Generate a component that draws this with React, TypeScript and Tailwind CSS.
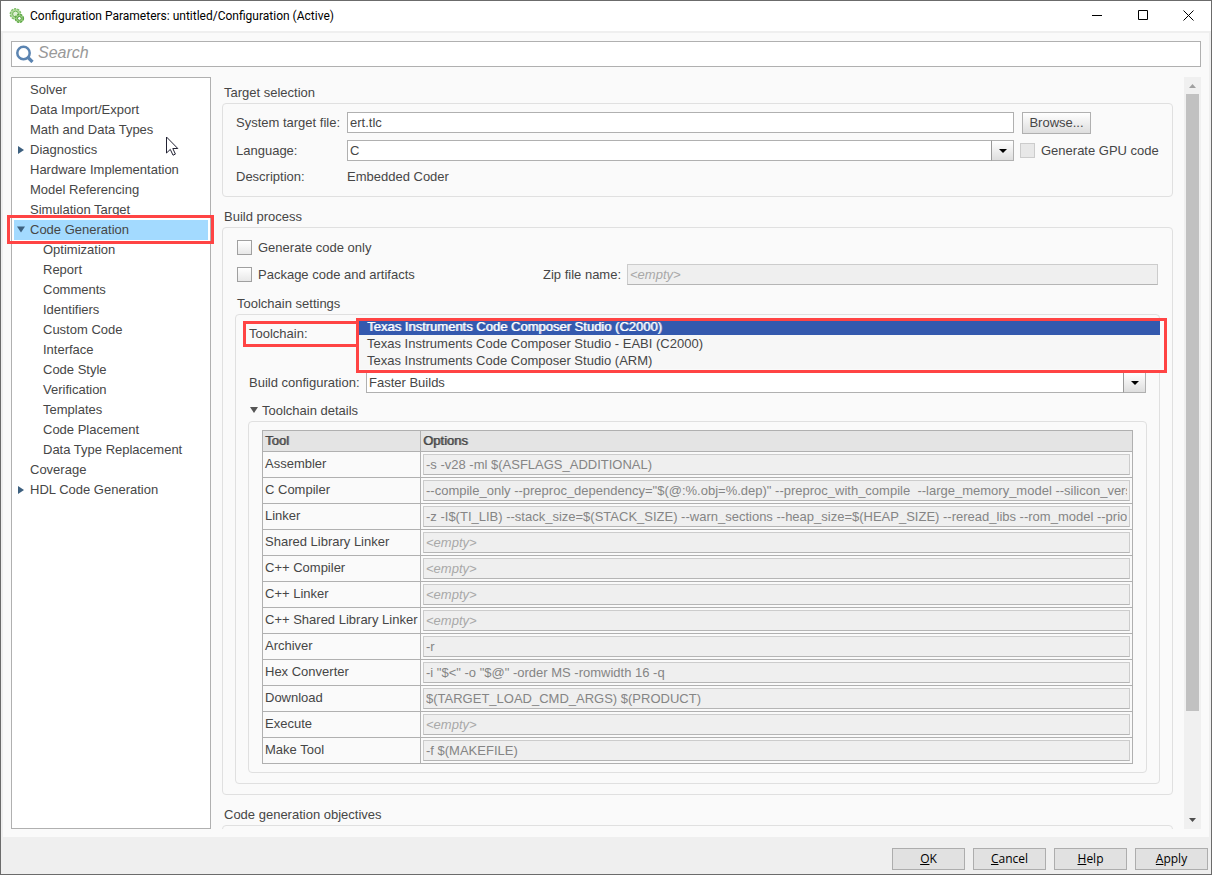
import { ReactNode, useState } from 'react';

interface TreeItem {
  label: string;
  level?: number;
  state?: 'open' | 'closed';
}

const TREE: TreeItem[] = [
  { label: 'Solver' },
  { label: 'Data Import/Export' },
  { label: 'Math and Data Types' },
  { label: 'Diagnostics', state: 'closed' },
  { label: 'Hardware Implementation' },
  { label: 'Model Referencing' },
  { label: 'Simulation Target' },
  { label: 'Code Generation', state: 'open' },
  { label: 'Optimization', level: 1 },
  { label: 'Report', level: 1 },
  { label: 'Comments', level: 1 },
  { label: 'Identifiers', level: 1 },
  { label: 'Custom Code', level: 1 },
  { label: 'Interface', level: 1 },
  { label: 'Code Style', level: 1 },
  { label: 'Verification', level: 1 },
  { label: 'Templates', level: 1 },
  { label: 'Code Placement', level: 1 },
  { label: 'Data Type Replacement', level: 1 },
  { label: 'Coverage' },
  { label: 'HDL Code Generation', state: 'closed' },
];

const TOOLS = [
  { name: 'Assembler', options: '-s -v28 -ml $(ASFLAGS_ADDITIONAL)' },
  {
    name: 'C Compiler',
    options:
      '--compile_only --preproc_dependency="$(@:%.obj=%.dep)" --preproc_with_compile  --large_memory_model --silicon_version=28',
  },
  {
    name: 'Linker',
    options:
      '-z -I$(TI_LIB) --stack_size=$(STACK_SIZE) --warn_sections --heap_size=$(HEAP_SIZE) --reread_libs --rom_model --priority',
  },
  { name: 'Shared Library Linker', options: '' },
  { name: 'C++ Compiler', options: '' },
  { name: 'C++ Linker', options: '' },
  { name: 'C++ Shared Library Linker', options: '' },
  { name: 'Archiver', options: '-r' },
  { name: 'Hex Converter', options: '-i "$<" -o "$@" -order MS -romwidth 16 -q' },
  { name: 'Download', options: '$(TARGET_LOAD_CMD_ARGS) $(PRODUCT)' },
  { name: 'Execute', options: '' },
  { name: 'Make Tool', options: '-f $(MAKEFILE)' },
];

const TOOLCHAINS = [
  'Texas Instruments Code Composer Studio (C2000)',
  'Texas Instruments Code Composer Studio - EABI (C2000)',
  'Texas Instruments Code Composer Studio (ARM)',
];

const disabledInput =
  'block h-[21px] w-full border border-[#cccccc] border-b-[#b5b5b5] bg-[#efefef] px-[2px] text-[#858585] placeholder:italic placeholder:text-[#a8a8a8]';

function GearIcon() {
  return (
    <svg width="16" height="16" viewBox="0 0 16 16" aria-hidden="true">
      <circle cx="6.5" cy="6" r="5.2" fill="#b5dba0" stroke="#7fbf6a" strokeWidth="1.4" strokeDasharray="2.2 1" />
      <circle cx="6.5" cy="6" r="2.9" fill="#dff0d4" stroke="#6cb356" />
      <circle cx="10.4" cy="10.4" r="4" fill="#9fd184" stroke="#5aa544" strokeWidth="1.4" strokeDasharray="2.2 1" />
      <circle cx="10.4" cy="10.4" r="1.9" fill="#fff" stroke="#4c9a3a" />
    </svg>
  );
}

function Twisty({ state }: { state: 'open' | 'closed' }) {
  return (
    <svg width="10" height="10" viewBox="0 0 10 10" fill="#3d607f" aria-hidden="true">
      {state === 'open' ? <path d="M1 1.500h8L5 7.500z" /> : <path d="M2 1v8l6-4z" />}
    </svg>
  );
}

function DropDown({ id, value }: { id: string; value: string }) {
  return (
    <div className="relative">
      <select id={id} className="block h-[21px] w-full appearance-none border border-[#b0b0b0] bg-white px-[2px] leading-[19px]">
        <option>{value}</option>
      </select>
      <span className="pointer-events-none absolute inset-y-0 right-0 flex w-[23px] items-center justify-center border border-[#b0b0b0] border-l-[#999999] bg-linear-to-b from-white to-[#dedede]">
        <svg width="8" height="4" viewBox="0 0 8 4" aria-hidden="true">
          <path d="M0 0h8L4 4z" fill="#000" />
        </svg>
      </span>
    </div>
  );
}

function CheckBox({ label, disabled }: { label: string; disabled?: boolean }) {
  return (
    <label className="flex h-[15px] items-center gap-[6px] whitespace-nowrap">
      <input
        type="checkbox"
        disabled={disabled}
        className="size-[15px] appearance-none border border-[#a0a0a0] bg-linear-to-b from-white to-[#e8e8e8] checked:bg-[#3b5bb0] disabled:border-[#cccccc] disabled:from-[#e8e8e8]"
      />
      {label}
    </label>
  );
}

function Group({ children, className = '' }: { children?: ReactNode; className?: string }) {
  return <div className={`rounded border border-[#e0e0e0] ${className}`}>{children}</div>;
}

function Sidebar() {
  const [selected, setSelected] = useState('Code Generation');

  return (
    <nav className="relative w-[200px] shrink-0 border border-[#b0b0b0] bg-white px-[2px] pt-[2px]">
      {TREE.map((item) => (
        <div key={item.label} className="relative">
          <button
            onClick={() => setSelected(item.label)}
            className={`flex h-5 w-full items-center text-left whitespace-nowrap ${
              item.label === selected ? 'bg-[#a3daff]' : ''
            }`}
          >
            <span className={`flex shrink-0 justify-start pl-[2px] ${item.level ? 'w-[29px]' : 'w-4'}`}>
              {item.state && <Twisty state={item.state} />}
            </span>
            {item.label}
          </button>
          {item.label === 'Code Generation' && (
            <div className="pointer-events-none absolute -top-[5px] -right-[6px] -bottom-1 -left-[7px] z-10 border-3 border-[#ff4444]" />
          )}
        </div>
      ))}
      <svg
        className="pointer-events-none absolute top-[58px] left-[154px]"
        width="13"
        height="20"
        viewBox="0 0 13 20"
        aria-hidden="true"
      >
        <path d="M.5 1v16l3.8-3.6L7 19.2l2.4-1.1-2.6-5.6h5z" fill="#fff" stroke="#222233" />
      </svg>
    </nav>
  );
}

function TargetSelection() {
  return (
    <section>
      <h2 className="mt-2 mb-[2px] pl-[2px]">Target selection</h2>
      <Group className="grid h-[94px] grid-cols-[111px_1fr_158px] content-start items-center gap-y-[6px] pt-2 pl-[13px]">
        <label htmlFor="target-file">System target file:</label>
        <input
          id="target-file"
          defaultValue="ert.tlc"
          className="h-[21px] w-full self-start border border-[#b0b0b0] bg-white px-[2px]"
        />
        <button className="ml-2 h-[22px] w-[69px] border border-[#b0b0b0] bg-linear-to-b from-white to-[#dedede]">
          Browse...
        </button>
        <label htmlFor="language">Language:</label>
        <DropDown id="language" value="C" />
        <div className="ml-[6px]">
          <CheckBox label="Generate GPU code" disabled />
        </div>
        <span className="pt-[2px]">Description:</span>
        <span className="pt-[2px]">Embedded Coder</span>
      </Group>
    </section>
  );
}

function ToolchainPicker() {
  return (
    <div className="relative h-[57px]">
      <div className="absolute top-[6px] left-[7px] flex h-[26px] w-[116px] items-center border-3 border-[#ff4444] pl-[3px]">
        Toolchain:
      </div>
      <div className="absolute top-[3px] -right-2 left-[120px] z-10 h-[55px] overflow-hidden border-3 border-[#ff4444] bg-[#fafafa] pr-1">
        <ul role="listbox" aria-label="Toolchain" className="-mt-[3px] bg-[#f7f7f7]">
          {TOOLCHAINS.map((name, i) => (
            <li
              key={name}
              role="option"
              aria-selected={i === 0}
              className="h-[17px] pl-2 leading-[17px] whitespace-nowrap aria-selected:bg-[#3459ae] aria-selected:text-white aria-selected:[text-shadow:1px_0_0_#ffffffb0]"
            >
              {name}
            </li>
          ))}
        </ul>
      </div>
    </div>
  );
}

function ToolTable() {
  return (
    <table className="w-full table-fixed border-collapse">
      <thead>
        <tr className="h-[21px] bg-[#e4e4e4] text-left [text-shadow:1px_0_0_#464646b0]">
          <th className="w-[158px] border border-[#b0b0b0] px-[2px] font-normal">Tool</th>
          <th className="border border-[#b0b0b0] px-[2px] font-normal">Options</th>
        </tr>
      </thead>
      <tbody>
        {TOOLS.map((tool) => (
          <tr key={tool.name} className="h-[26px]">
            <td className="border border-[#b0b0b0] p-0 pb-px pl-[2px] whitespace-nowrap">{tool.name}</td>
            <td className="border border-[#b0b0b0] px-[2px] py-0">
              <input
                aria-label={`${tool.name} options`}
                disabled
                defaultValue={tool.options}
                placeholder="<empty>"
                className={disabledInput}
              />
            </td>
          </tr>
        ))}
      </tbody>
    </table>
  );
}

function BuildProcess() {
  return (
    <section>
      <h2 className="mt-3 mb-[2px] pl-[2px]">Build process</h2>
      <Group className="px-3 pt-3 pb-[10px]">
        <div className="pl-[2px]">
          <CheckBox label="Generate code only" />
        </div>
        <div className="mt-[9px] flex h-[21px] items-center pr-[2px] pl-[2px]">
          <div className="w-[306px] shrink-0">
            <CheckBox label="Package code and artifacts" />
          </div>
          <label htmlFor="zip-name" className="w-[84px] shrink-0">
            Zip file name:
          </label>
          <input id="zip-name" disabled placeholder="<empty>" className={disabledInput} />
        </div>
        <h3 className="mt-[11px] mb-[2px] pl-[2px]">Toolchain settings</h3>
        <Group className="pb-[10px]">
          <ToolchainPicker />
          <div className="mr-[13px] ml-[13px] grid grid-cols-[117px_1fr] items-center">
            <label htmlFor="build-config">Build configuration:</label>
            <DropDown id="build-config" value="Faster Builds" />
          </div>
          <div className="mr-3 ml-3">
            <button className="mt-[10px] mb-[2px] flex h-4 items-center gap-1">
              <svg width="10" height="10" viewBox="0 0 10 10" aria-hidden="true">
                <path d="M2 1h8L6 7z" fill="#555" />
              </svg>
              Toolchain details
            </button>
            <Group className="px-[13px] pt-2 pb-2">
              <ToolTable />
            </Group>
          </div>
        </Group>
      </Group>
    </section>
  );
}

function ScrollBar() {
  return (
    <div className="flex w-[17px] shrink-0 flex-col items-center bg-[#f0f0f0]" aria-hidden="true">
      <svg width="17" height="17" viewBox="0 0 17 17">
        <path d="M5 11h7L8.500 7z" fill="#a0a0a0" />
      </svg>
      <div className="h-[82%] w-[13px] bg-[#c1c1c1]" />
      <svg className="mt-auto" width="17" height="17" viewBox="0 0 17 17">
        <path d="M5 6h7L8.500 10z" fill="#4d4d4d" />
      </svg>
    </div>
  );
}

export default function App() {
  return (
    <div className="flex h-screen flex-col overflow-hidden border border-[#6b6b6b] bg-[#efefef] font-['Liberation_Sans',Arial,sans-serif] text-[13px] leading-4 text-[#464646]">
      <header className="flex h-[30px] shrink-0 items-center bg-white pl-2 text-[12px] text-black">
        <GearIcon />
        <h1 className="ml-[5px] grow font-['Roboto',sans-serif]">
          Configuration Parameters: untitled/Configuration (Active)
        </h1>
        <button aria-label="Minimize" className="flex h-full w-[45px] items-center justify-center">
          <svg width="11" height="11" viewBox="0 0 11 11" stroke="#000">
            <path d="M0 4.500h10" />
          </svg>
        </button>
        <button aria-label="Maximize" className="flex h-full w-[45px] items-center justify-center">
          <svg width="10" height="12" viewBox="0 0 10 12" fill="none" stroke="#000">
            <path d="M.5.5h9v9h-9z" />
          </svg>
        </button>
        <button aria-label="Close" className="flex h-full w-[46px] items-center justify-center">
          <svg width="11" height="13" viewBox="0 0 11 13" stroke="#000">
            <path d="M.5.500l10 10M10.500.500l-10 10" />
          </svg>
        </button>
      </header>

      <main className="mx-[2px] mt-[2px] flex min-h-0 grow flex-col gap-[10px] bg-[#fafafa] p-2">
        <label className="flex h-[26px] shrink-0 items-center border border-[#b0b0b0] bg-white pl-1">
          <svg width="18" height="18" viewBox="0 0 18 18" fill="none" stroke="#5b84b1" aria-hidden="true">
            <circle cx="7.500" cy="8" r="6.200" strokeWidth="2.500" />
            <path d="M11.500 12l5 5" strokeWidth="3.200" />
          </svg>
          <input
            aria-label="Search"
            placeholder="Search"
            className="h-full grow pb-[2px] pl-1 text-[16px] outline-none placeholder:text-[#999999] placeholder:italic"
          />
        </label>
        <div className="flex min-h-0 grow">
          <Sidebar />
          <div className="mr-[11px] ml-[11px] min-w-0 grow overflow-hidden">
            <TargetSelection />
            <BuildProcess />
            <section>
              <h2 className="mt-3 mb-[2px] pl-[2px]">Code generation objectives</h2>
              <Group className="h-24" />
            </section>
          </div>
          <ScrollBar />
        </div>
      </main>

      <footer className="flex h-[37px] shrink-0 items-center justify-end gap-2 pt-2 pr-[3px] pb-[1px] font-['Open_Sans','Noto_Sans',sans-serif] text-[12px] text-black">
        {['OK', 'Cancel', 'Help', 'Apply'].map((name) => (
          <button key={name} className="h-[22px] w-[73px] border border-[#adadad] bg-[#e1e1e1]">
            <span className="underline">{name[0]}</span>
            {name.slice(1)}
          </button>
        ))}
      </footer>
    </div>
  );
}
